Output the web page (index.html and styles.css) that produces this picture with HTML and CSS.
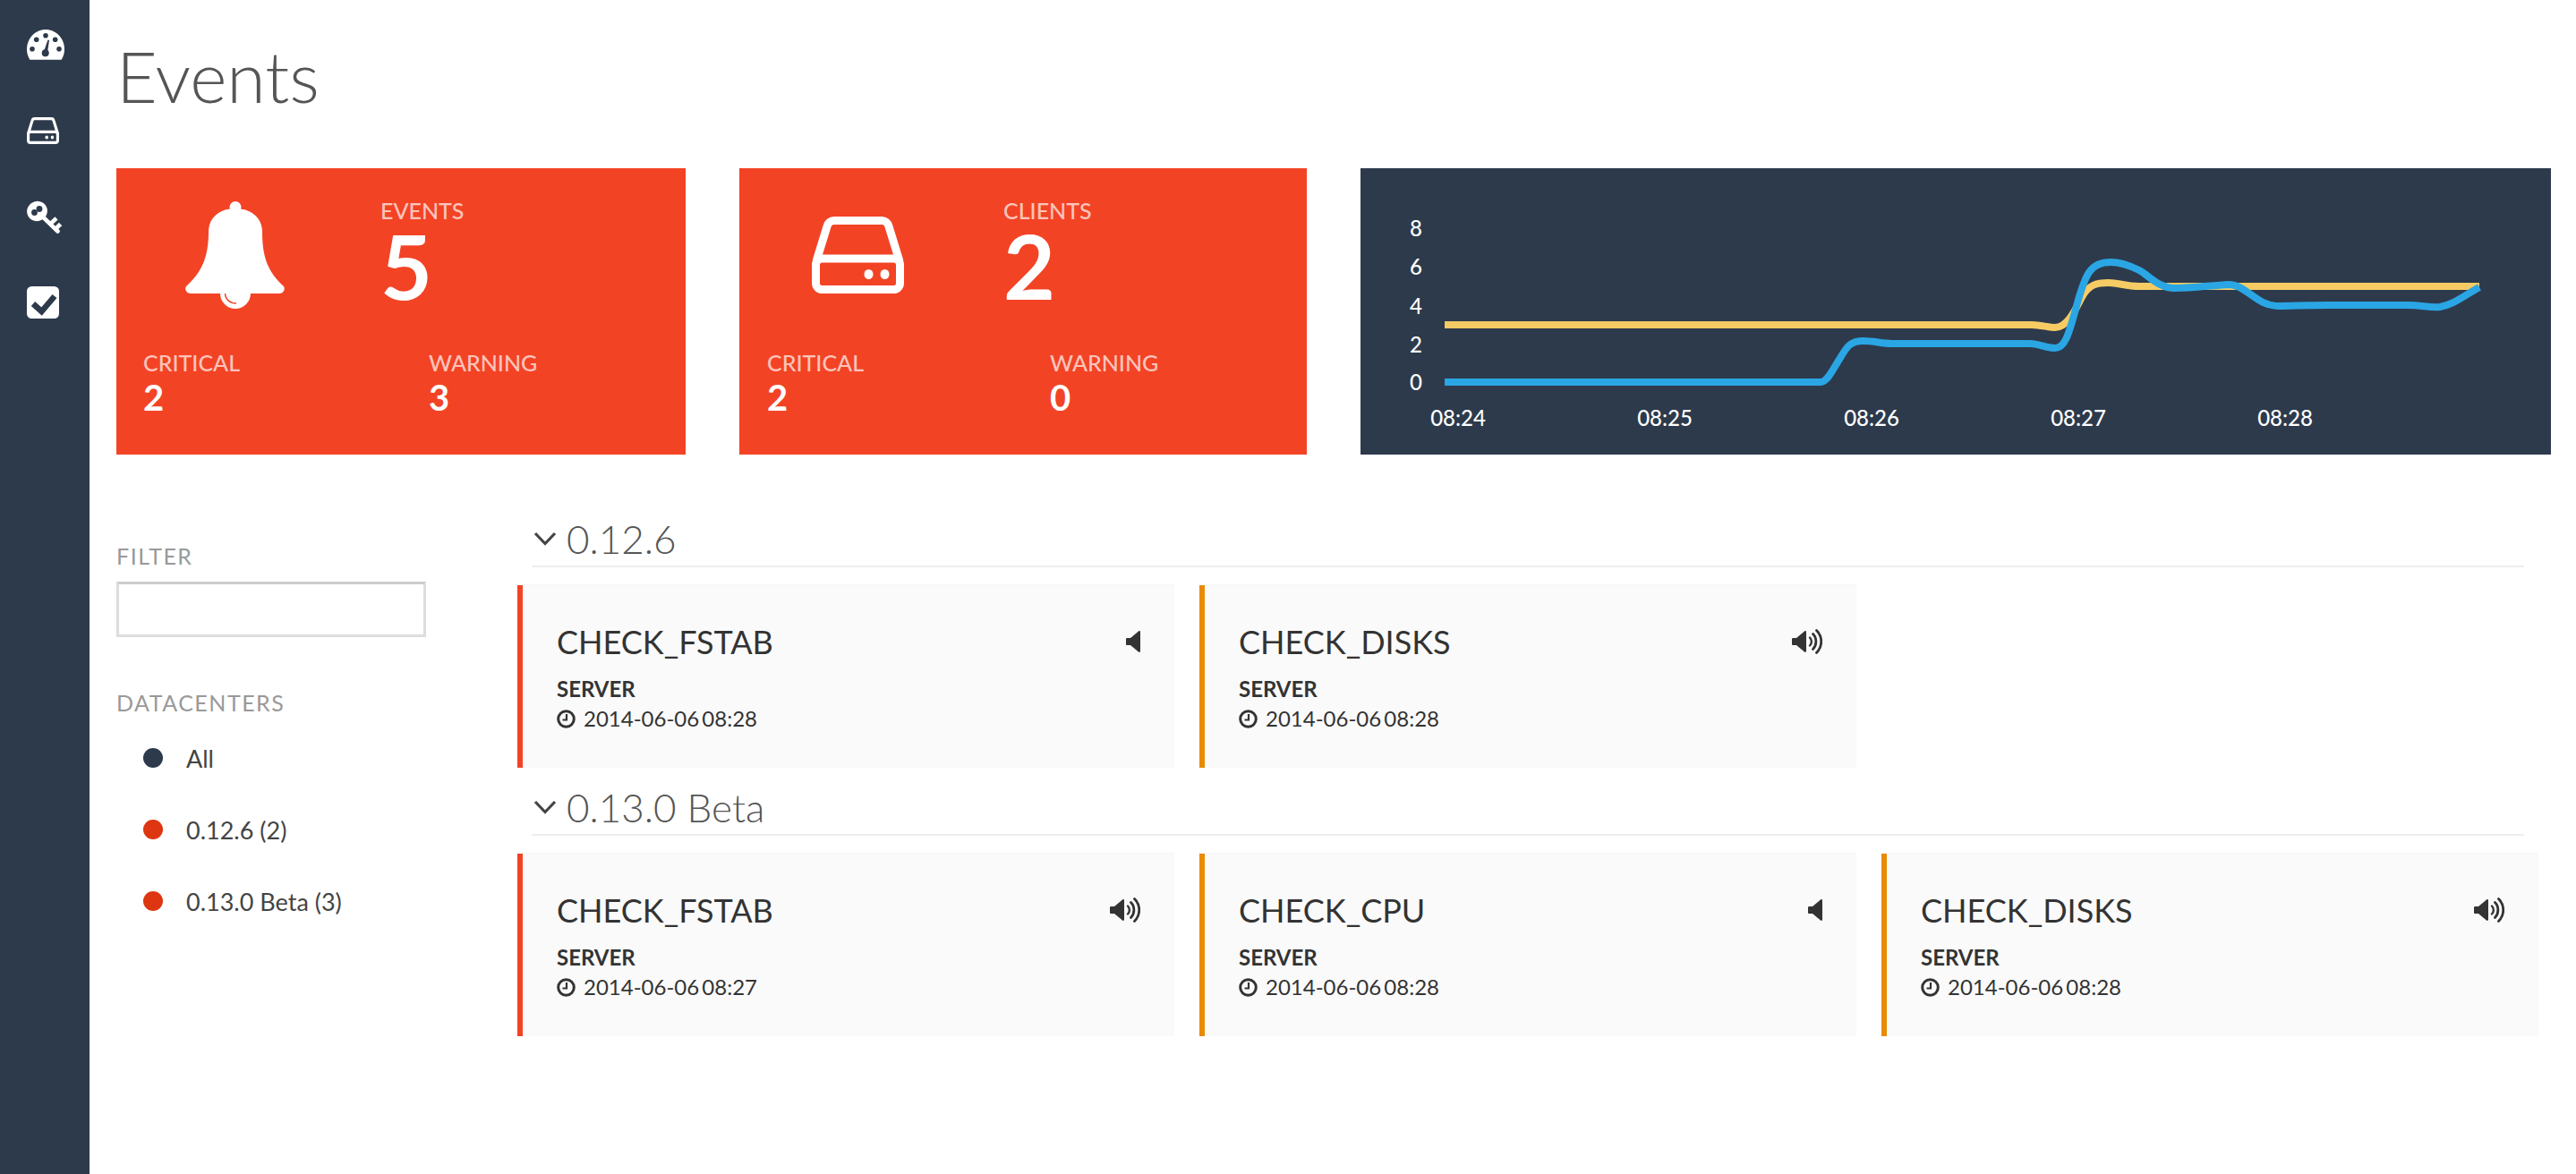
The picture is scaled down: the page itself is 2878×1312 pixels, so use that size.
FILE: index.html
```html
<!DOCTYPE html>
<html>
<head>
	<meta charset="utf-8">
	<title>Events</title>
	<link rel="stylesheet" href="styles.css">
</head>
<body>
	<svg class="sprites" width="0" height="0">
		<symbol id="i-hdd" viewBox="0 0 103 86">
			<path d="M5 50 L17 11 C18 7 21 4.500 25 4.500 H78 C82 4.500 85 7 86 11 L98 50" fill="none" stroke="currentColor" stroke-width="9"/>
			<rect x="4.500" y="47" width="94" height="34.500" rx="7" fill="none" stroke="currentColor" stroke-width="9"/>
			<ellipse cx="63.500" cy="64.500" rx="5" ry="5.500" fill="currentColor"/>
			<ellipse cx="81.500" cy="64.500" rx="5" ry="5.500" fill="currentColor"/>
		</symbol>
		<symbol id="i-mute" viewBox="0 0 16 24">
			<path d="M0 9 C0 8 1 8 1.500 8 H5 L14 .4 C15 -.3 16 .2 16 1.500 V22.500 C16 23.800 15 24.300 14 23.600 L5 16 H1.500 C1 16 0 16 0 15 Z" fill="currentColor"/>
		</symbol>
		<symbol id="i-sound" viewBox="0 0 34 28">
			<path d="M0 11 C0 10 1 10 1.500 10 H5 L14 2.400 C15 1.700 16 2.200 16 3.500 V24.500 C16 25.800 15 26.300 14 25.600 L5 18 H1.500 C1 18 0 18 0 17 Z" fill="currentColor"/>
			<g fill="none" stroke="currentColor" stroke-linecap="round">
				<path d="M20 9.500 C22.500 12 22.500 16 20 18.500" stroke-width="2.400"/>
				<path d="M23.500 5.500 C28 10 28 18 23.500 22.500" stroke-width="2.800"/>
				<path d="M27.500 1.500 C34.500 8.500 34.500 19.500 27.500 26.500" stroke-width="2.800"/>
			</g>
		</symbol>
		<symbol id="i-clock" viewBox="0 0 21 21">
			<circle cx="10.500" cy="10.500" r="8.800" fill="none" stroke="currentColor" stroke-width="3"/>
			<path d="M11 5 V11.500 H6.500" fill="none" stroke="currentColor" stroke-width="2.200"/>
		</symbol>
		<symbol id="i-chevron" viewBox="0 0 26 16">
			<path d="M2 2 L13 13.500 L24 2" fill="none" stroke="currentColor" stroke-width="3.200"/>
		</symbol>
	</svg>

	<div class="app">
		<nav class="sidebar">
			<a class="nav-item">
				<svg class="nav-gauge" viewBox="0 0 42 34">
					<path d="M3.300 33.700 C1 30 0 26 0 22 C0 10 9.400 0 21 0 C32.600 0 42 10 42 22 C42 26 41 30 38.700 33.700 Z" fill="#fff"/>
					<g fill="#2d3a4c">
						<circle cx="6" cy="21.700" r="2.800"/>
						<circle cx="10.700" cy="11.300" r="2.800"/>
						<circle cx="21" cy="6.700" r="2.800"/>
						<circle cx="31.700" cy="11.300" r="2.800"/>
						<circle cx="36" cy="21.700" r="2.800"/>
						<circle cx="20.700" cy="26.300" r="4"/>
						<path d="M18.800 25 L23.500 11.500 L25 12 L22.800 27 Z"/>
					</g>
				</svg>
			</a>
			<a class="nav-item">
				<svg class="nav-hdd"><use href="#i-hdd"/></svg>
			</a>
			<a class="nav-item">
				<svg class="nav-key" viewBox="0 0 39 37">
					<ellipse cx="11.500" cy="12" rx="11.500" ry="11" fill="#fff" transform="rotate(-30 11.500 12)"/>
					<circle cx="8.500" cy="13.500" r="3.400" fill="#2d3a4c"/>
					<circle cx="14" cy="9.500" r="3.400" fill="#2d3a4c"/>
					<g fill="none" stroke="#fff" stroke-width="4.600">
						<path d="M18 18.500 L34.500 34.500" stroke-linecap="round"/>
						<path d="M26 26.500 L33 19.800"/>
						<path d="M32 32 L37.500 26.500"/>
					</g>
				</svg>
			</a>
			<a class="nav-item">
				<svg class="nav-check" viewBox="0 0 36 36">
					<rect width="36" height="36" rx="5.500" fill="#fff"/>
					<path d="M7 19.500 L16.500 28 L31 11" fill="none" stroke="#2d3a4c" stroke-width="6.500"/>
				</svg>
			</a>
		</nav>

		<main class="main">
			<h1 class="page-title">Events</h1>

			<section class="stats">
				<div class="stat">
					<div class="stat-top">
						<div class="stat-icon">
							<svg class="icon-bell" viewBox="0 0 111 120">
								<circle cx="56" cy="6.500" r="6.500" fill="#fff"/>
								<path d="M56 8 C39 8 26 18 26 34 C26 60 20 78 1 95 C-1 98 1 103 6 103 H105 C110 103 112 98 110 95 C91 78 86 60 86 34 C86 18 73 8 56 8 Z" fill="#fff"/>
								<circle cx="56" cy="103" r="17" fill="#fff"/>
								<path d="M44.500 103 C45 110 50 114 57 114" fill="none" stroke="#f34325" stroke-width="1.500"/>
							</svg>
						</div>
						<div>
							<div class="stat-label">EVENTS</div>
							<div class="stat-count">5</div>
						</div>
					</div>
					<div class="stat-foot">
						<div class="stat-col">
							<div class="stat-label">CRITICAL</div>
							<div class="stat-value">2</div>
						</div>
						<div class="stat-col">
							<div class="stat-label">WARNING</div>
							<div class="stat-value">3</div>
						</div>
					</div>
				</div>

				<div class="stat stat-clients">
					<div class="stat-top">
						<div class="stat-icon">
							<svg class="icon-hdd"><use href="#i-hdd"/></svg>
						</div>
						<div>
							<div class="stat-label">CLIENTS</div>
							<div class="stat-count">2</div>
						</div>
					</div>
					<div class="stat-foot">
						<div class="stat-col">
							<div class="stat-label">CRITICAL</div>
							<div class="stat-value">2</div>
						</div>
						<div class="stat-col">
							<div class="stat-label">WARNING</div>
							<div class="stat-value">0</div>
						</div>
					</div>
				</div>

				<div class="chart">
					<svg class="chart-svg" viewBox="1520 188 1330 320">
						<g class="chart-text">
							<text x="1575" y="263.500" text-anchor="start">8</text>
							<text x="1575" y="306.500" text-anchor="start">6</text>
							<text x="1575" y="350.500" text-anchor="start">4</text>
							<text x="1575" y="393.500" text-anchor="start">2</text>
							<text x="1575" y="435.500" text-anchor="start">0</text>
							<text x="1629" y="475.500" text-anchor="middle">08:24</text>
							<text x="1860" y="475.500" text-anchor="middle">08:25</text>
							<text x="2091" y="475.500" text-anchor="middle">08:26</text>
							<text x="2322" y="475.500" text-anchor="middle">08:27</text>
							<text x="2553" y="475.500" text-anchor="middle">08:28</text>
						</g>
						<path class="line-warning" d="M1614 363 H2270 C2280 363 2288 366 2296 366 C2308 366 2316 352 2326 332 C2334 318 2342 316 2356 316 C2366 316 2376 320 2390 320 H2770"/>
						<path class="line-critical" d="M1614 427 H2034 C2042 427 2048 412 2056 400 C2064 386 2068 381 2082 381 C2094 381 2102 384 2114 384 H2268 C2278 384 2285 389 2296 389 C2308 389 2312 370 2320 342 C2330 305 2336 293 2358 293 C2368 293 2378 296 2390 302 C2402 309 2412 322 2430 322 C2450 322 2470 319 2490 318 C2510 318 2520 342 2546 342 C2560 342 2576 341 2600 341 H2690 C2705 341 2715 344 2726 343 C2740 341 2752 331 2770 321"/>
					</svg>
				</div>
			</section>

			<div class="lower">
				<aside class="filters">
					<div class="filter-label">FILTER</div>
					<input class="filter-input" type="text">
					<div class="filter-label filter-label-dc">DATACENTERS</div>
					<ul class="dc-list">
						<li class="dc-row"><span class="dot dot-all"></span>All</li>
						<li class="dc-row"><span class="dot dot-red"></span>0.12.6 (2)</li>
						<li class="dc-row"><span class="dot dot-red"></span>0.13.0 Beta (3)</li>
					</ul>
				</aside>

				<div class="groups">
					<section class="group">
						<h2 class="group-head"><svg class="chevron"><use href="#i-chevron"/></svg>0.12.6</h2>
						<div class="cards">
							<div class="card card-critical">
								<div class="card-head">
									<span class="card-title">CHECK_FSTAB</span>
									<svg class="ico-mute"><use href="#i-mute"/></svg>
								</div>
								<div class="card-server">SERVER</div>
								<div class="card-time"><svg class="ico-clock"><use href="#i-clock"/></svg>2014-06-06 08:28</div>
							</div>
							<div class="card card-warning">
								<div class="card-head">
									<span class="card-title">CHECK_DISKS</span>
									<svg class="ico-sound"><use href="#i-sound"/></svg>
								</div>
								<div class="card-server">SERVER</div>
								<div class="card-time"><svg class="ico-clock"><use href="#i-clock"/></svg>2014-06-06 08:28</div>
							</div>
						</div>
					</section>

					<section class="group">
						<h2 class="group-head"><svg class="chevron"><use href="#i-chevron"/></svg>0.13.0 Beta</h2>
						<div class="cards">
							<div class="card card-critical">
								<div class="card-head">
									<span class="card-title">CHECK_FSTAB</span>
									<svg class="ico-sound"><use href="#i-sound"/></svg>
								</div>
								<div class="card-server">SERVER</div>
								<div class="card-time"><svg class="ico-clock"><use href="#i-clock"/></svg>2014-06-06 08:27</div>
							</div>
							<div class="card card-warning">
								<div class="card-head">
									<span class="card-title">CHECK_CPU</span>
									<svg class="ico-mute"><use href="#i-mute"/></svg>
								</div>
								<div class="card-server">SERVER</div>
								<div class="card-time"><svg class="ico-clock"><use href="#i-clock"/></svg>2014-06-06 08:28</div>
							</div>
							<div class="card card-warning">
								<div class="card-head">
									<span class="card-title">CHECK_DISKS</span>
									<svg class="ico-sound"><use href="#i-sound"/></svg>
								</div>
								<div class="card-server">SERVER</div>
								<div class="card-time"><svg class="ico-clock"><use href="#i-clock"/></svg>2014-06-06 08:28</div>
							</div>
						</div>
					</section>
				</div>
			</div>
		</main>
	</div>
</body>
</html>
```

FILE: styles.css
```css
html, body {
	margin: 0;
	padding: 0;
	height: 100%;
	background-color: #fff;
	font-family: Lato, "Open Sans", sans-serif;
	color: #333;
}

.sprites {
	display: block;
	height: 0;
}

.app {
	display: flex;
	min-height: 100%;
}

/* left bar */
.sidebar {
	width: 100px;
	flex: none;
	box-sizing: border-box;
	padding: 2px 0 0 30px;
	background-color: #2d3a4c;
	color: #fff;
}

.nav-item {
	display: flex;
	align-items: center;
	height: 96px;
}

.nav-gauge {
	width: 42px;
	height: 34px;
}

.nav-hdd {
	width: 36px;
	height: 30px;
}

.nav-key {
	width: 39px;
	height: 37px;
}

.nav-check {
	width: 36px;
	height: 36px;
}

.main {
	flex: 1;
	min-width: 0;
	padding: 40px 28px 0 30px;
}

.page-title {
	margin: 0 0 58px 0;
	font-size: 79px;
	line-height: 90px;
	font-weight: 300;
	color: #555;
}

/* top row */
.stats {
	display: flex;
	gap: 60px;
	height: 320px;
}

.stat {
	width: 636px;
	flex: none;
	box-sizing: border-box;
	padding-top: 32px;
	background-color: #f34325;
	color: #fff;
}

.stat-clients {
	width: 634px;
}

.stat-top {
	display: flex;
	height: 130px;
}

.stat-icon {
	display: flex;
	align-self: center;
	justify-content: center;
	width: 264px;
	margin-right: 31px;
}

.icon-bell {
	width: 111px;
	height: 120px;
}

.icon-hdd {
	width: 103px;
	height: 86px;
}

.stat-label {
	font-size: 25px;
	line-height: 30px;
	font-weight: 500;
	color: rgba(255, 255, 255, 0.7);
}

.stat-count {
	font-size: 100px;
	line-height: 92px;
	font-weight: 700;
}

.stat-foot {
	display: flex;
	margin-top: 40px;
	padding-left: 30px;
}

.stat-col {
	width: 319px;
	flex: none;
}

.stat-clients .stat-foot {
	padding-left: 31px;
}

.stat-clients .stat-col {
	width: 316px;
}

.stat-value {
	margin-top: 2px;
	font-size: 40px;
	line-height: 44px;
	font-weight: 700;
}

.chart {
	flex: 1;
	background-color: #2d3a4c;
}

.chart-svg {
	display: block;
	width: 100%;
	height: 100%;
}

.chart-text {
	font-size: 24px;
	font-weight: 500;
	fill: #fff;
}

.line-warning,
.line-critical {
	fill: none;
	stroke-width: 8;
}

.line-warning {
	stroke: #f7cb64;
}

.line-critical {
	stroke: #2aa6e4;
}

/* below the top row */
.lower {
	display: flex;
}

.filters {
	width: 448px;
	flex: none;
	padding-top: 98px;
}

.filter-label {
	font-size: 25px;
	line-height: 30px;
	letter-spacing: 1.5px;
	color: #999;
}

.filter-label-dc {
	margin-top: 58px;
}

.filter-input {
	display: block;
	box-sizing: border-box;
	width: 346px;
	height: 62px;
	margin: 14px 0 0 0;
	border: 3px solid #ddd;
	border-top-color: #ccc;
	background-color: #fff;
}

.dc-list {
	list-style: none;
	margin: 7px 0 0 0;
	padding: 0 0 0 30px;
}

.dc-row {
	display: flex;
	align-items: center;
	height: 80px;
	font-size: 27px;
	color: #444;
}

.dot {
	width: 22px;
	height: 22px;
	margin-right: 26px;
	border-radius: 50%;
}

.dot-all {
	background-color: #2d3a4c;
}

.dot-red {
	background-color: #dd3611;
}

.groups {
	flex: 1;
	min-width: 0;
	padding: 64px 14px 0 0;
}

.group {
	margin-bottom: 14px;
}

.group-head {
	display: flex;
	align-items: center;
	height: 60px;
	margin: 0 16px 20px 16px;
	padding-left: 2px;
	border-bottom: 2px solid #eee;
	font-size: 44px;
	font-weight: 300;
	color: #555;
}

.chevron {
	width: 26px;
	height: 16px;
	margin-right: 11px;
	color: #444;
}

.cards {
	display: flex;
	gap: 28px;
}

.card {
	width: 734px;
	height: 204px;
	flex: none;
	box-sizing: border-box;
	padding: 41px 38px 0 38px;
	border-left: 6px solid #f34325;
	background-color: #fafafa;
	box-shadow: 0 -1px 1px #f6f6f6;
	color: #333;
}

.card-warning {
	border-left-color: #e98b00;
}

.card-head {
	display: flex;
	justify-content: space-between;
	align-items: center;
	height: 44px;
}

.card-title {
	font-size: 36px;
	font-weight: 400;
}

.ico-mute {
	width: 16px;
	height: 24px;
}

.ico-sound {
	width: 34px;
	height: 28px;
}

.card-server {
	margin-top: 16px;
	font-size: 24px;
	line-height: 30px;
	font-weight: 700;
}

.card-time {
	display: flex;
	align-items: center;
	margin-top: 3px;
	font-size: 24px;
	line-height: 30px;
	word-spacing: -3px;
}

.ico-clock {
	width: 21px;
	height: 21px;
	margin-right: 9px;
}
```
